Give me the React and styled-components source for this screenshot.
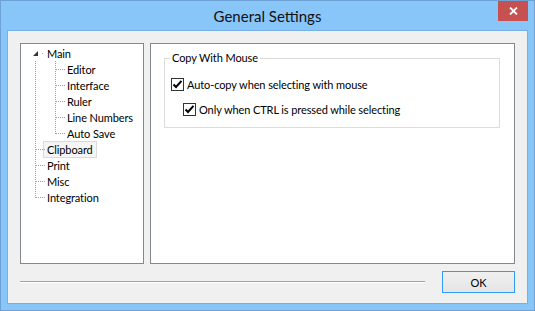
import React from 'react'
import styled, { createGlobalStyle } from 'styled-components'

const Global = createGlobalStyle`
    html, body { margin: 0; padding: 0; }
    body {
        width: 535px;
        height: 311px;
        overflow: hidden;
        background: #88c5f8;
        font-family: Lato, "Noto Sans", sans-serif;
        font-size: 11px;
        letter-spacing: -0.1px;
        color: #000;
    }
`;

const Window = styled.div`
    box-sizing: border-box;
    width: 535px;
    height: 311px;
    border: 1px solid #6ea2d4;
    background: #88c5f8;
    display: flex;
    flex-direction: column;
`;

const TitleBar = styled.div`
    height: 29px;
    position: relative;
    display: flex;
    align-items: center;
    justify-content: center;
    font-size: 15px;
    letter-spacing: 0;
    color: #111;
`;

const CloseButton = styled.div`
    position: absolute;
    top: 0;
    right: 6px;
    width: 30px;
    height: 20px;
    background: #c75050;
    display: flex;
    align-items: center;
    justify-content: center;
`;

const Client = styled.div`
    flex: 1;
    margin: 0 6px 6px 6px;
    border: 1px solid #79b0e3;
    background: #f0f0f0;
    padding: 12px 12px 0 12px;
    display: flex;
    flex-direction: column;
`;

const Panels = styled.div`
    display: flex;
    gap: 6px;
    height: 221px;
`;

const Box = styled.div`
    box-sizing: border-box;
    height: 100%;
    width: ${p => p.w}px;
    border: 1px solid #828790;
    background: #fff;
`;

const Tree = styled.div`
    padding-top: 1px;
`;

const Row = styled.div`
    position: relative;
    height: 16px;
    display: flex;
    align-items: center;
    padding-left: ${p => p.level ? 46 : 26}px;
`;

const Guide = styled.span`
    position: absolute;
    left: ${p => p.x}px;
    top: 0;
    width: 1px;
    height: ${p => p.half ? 9 : 16}px;
    background: repeating-linear-gradient(to bottom, #a0a0a0 0 1px, transparent 1px 2px);
`;

const Branch = styled.span`
    position: absolute;
    left: ${p => p.x + 1}px;
    top: 8px;
    width: 9px;
    height: 1px;
    background: repeating-linear-gradient(to right, #a0a0a0 0 1px, transparent 1px 2px);
`;

const Expander = styled.svg`
    position: absolute;
    left: 12px;
    top: 6px;
`;

const Dot = styled.span`
    position: absolute;
    left: 21px;
    top: 8px;
    width: 1px;
    height: 1px;
    background: #a0a0a0;
`;

const Label = styled.span`
    line-height: 15px;
    padding: 0 3px;
    margin-left: -4px;
    border: 1px solid ${p => p.selected ? '#dadada' : 'transparent'};
    background: ${p => p.selected ? '#f5f5f5' : 'transparent'};
    white-space: nowrap;
`;

const Content = styled.div`
    padding: 6px 14px 0 13px;
`;

const Group = styled.fieldset`
    margin: 0;
    padding: 0 0 9px 0;
    border: 1px solid #dcdcdc;
    min-width: 0;
`;

const Legend = styled.legend`
    margin-left: 5px;
    padding: 0 2px;
    line-height: 16px;
`;

const CheckRow = styled.label`
    display: flex;
    align-items: center;
    height: 17px;
    margin-top: ${p => p.first ? 10 : 8}px;
    padding-left: ${p => p.indent ? 18 : 6}px;
    gap: 3px;
    white-space: nowrap;
`;

const CheckBox = styled.span`
    box-sizing: border-box;
    width: 13px;
    height: 13px;
    border: 1px solid #333;
    background: #fff;
    display: flex;
    align-items: center;
    justify-content: center;
`;

const Footer = styled.div`
    margin-top: 7px;
    height: 22px;
    display: flex;
    align-items: center;
`;

const Separator = styled.div`
    flex: 1;
    margin-right: 17px;
    border-top: 1px solid #a0a0a0;
    border-bottom: 1px solid #fff;
    height: 0;
`;

const Button = styled.button`
    box-sizing: border-box;
    width: 73px;
    height: 22px;
    border: 1px solid #3399ff;
    background: linear-gradient(#f0f0f0, #e5e5e5);
    font-family: inherit;
    font-size: 11px;
    color: #000;
    padding: 0;
`;

const Check = () => (
    <CheckBox>
        <svg width="11" height="11" viewBox="0 0 11 11">
            <path d="M1.5 5.5 L4 8 L9.5 1.8" fill="none" stroke="#000" strokeWidth="2" />
        </svg>
    </CheckBox>
)

const children = ['Editor', 'Interface', 'Ruler', 'Line Numbers', 'Auto Save']
const topLevel = ['Clipboard', 'Print', 'Misc', 'Integration']

export default () => {
    return (
        <Window>
            <Global />
            <TitleBar>
                General Settings
                <CloseButton>
                    <svg width="9" height="8" viewBox="0 0 9 8">
                        <path d="M1 0.5 L8 7.5 M8 0.5 L1 7.5" stroke="#fff" strokeWidth="1.8" />
                    </svg>
                </CloseButton>
            </TitleBar>
            <Client>
                <Panels>
                    <Box w={124}>
                        <Tree>
                            <Row>
                                <Expander width="5" height="5" viewBox="0 0 5 5">
                                    <path d="M5 0 L5 5 L0 5 Z" fill="#333" />
                                </Expander>
                                <Dot />
                                <Label>Main</Label>
                            </Row>
                            {children.map((c, i) => (
                                <Row level={1} key={c}>
                                    <Guide x={14} />
                                    <Guide x={34} half={i === children.length - 1} />
                                    <Branch x={34} />
                                    <Label>{c}</Label>
                                </Row>
                            ))}
                            {topLevel.map((t, i) => (
                                <Row key={t}>
                                    <Guide x={14} half={i === topLevel.length - 1} />
                                    <Branch x={14} />
                                    <Label selected={t === 'Clipboard'}>{t}</Label>
                                </Row>
                            ))}
                        </Tree>
                    </Box>
                    <Box w={365}>
                        <Content>
                            <Group>
                                <Legend>Copy With Mouse</Legend>
                                <CheckRow first>
                                    <Check />
                                    Auto-copy when selecting with mouse
                                </CheckRow>
                                <CheckRow indent>
                                    <Check />
                                    Only when CTRL is pressed while selecting
                                </CheckRow>
                            </Group>
                        </Content>
                    </Box>
                </Panels>
                <Footer>
                    <Separator />
                    <Button>OK</Button>
                </Footer>
            </Client>
        </Window>
    )
}
